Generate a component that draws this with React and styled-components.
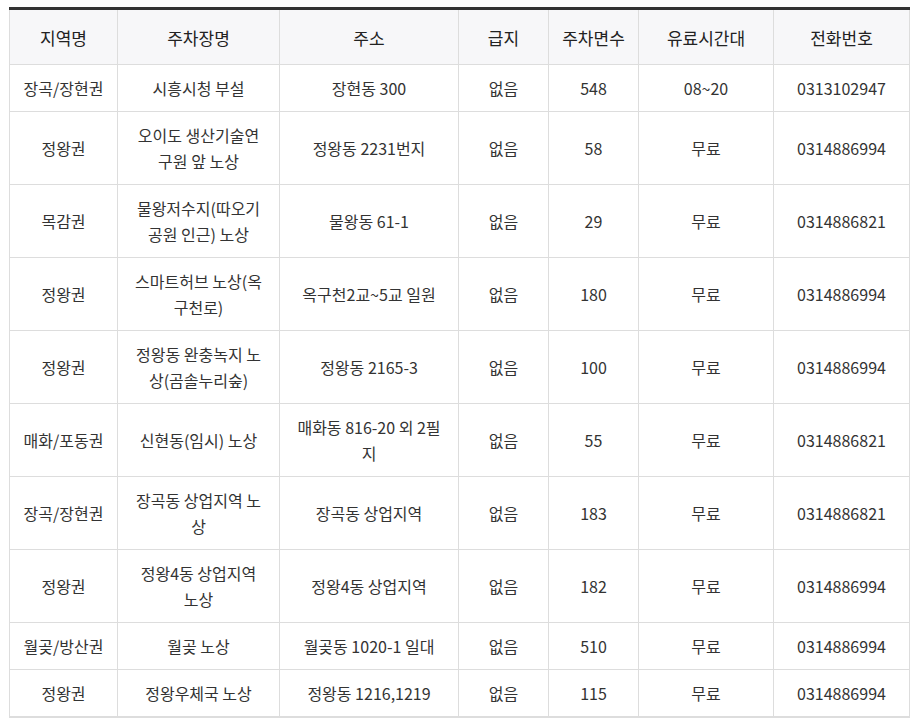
import React from 'react';
import styled, { createGlobalStyle } from 'styled-components';

const GlobalStyle = createGlobalStyle`
  body {
    margin: 0;
    background: #ffffff;
    font-family: "Noto Sans CJK KR", "Noto Sans", sans-serif;
    color: #333333;
  }
`;

const Wrapper = styled.div`
  padding: 7px 8px 0 9px;
`;

const Table = styled.table`
  width: 900px;
  border-collapse: collapse;
  table-layout: fixed;
  border-top: 3px solid #333333;
  border-bottom: 2px solid #dddddd;
`;

const HeadCell = styled.th`
  padding: 15px 6px 14px;
  line-height: 25px;
  font-size: 17px;
  font-weight: 400;
  color: #222222;
  background: #f7f7f9;
  border: 1px solid #dddddd;
  border-top: none;
  text-align: center;
`;

const Cell = styled.td`
  padding: 10px ${(p) => (p.$wrap ? 15 : 6)}px;
  line-height: 26px;
  font-size: 16px;
  color: #333333;
  border: 1px solid #dddddd;
  text-align: center;
  vertical-align: middle;
  word-break: break-all;
`;

const columns = [
  { title: '지역명', width: 108 },
  { title: '주차장명', width: 162, wrap: true },
  { title: '주소', width: 179, wrap: true },
  { title: '급지', width: 90 },
  { title: '주차면수', width: 90 },
  { title: '유료시간대', width: 135 },
  { title: '전화번호', width: 136 },
];

const rows = [
  ['장곡/장현권', '시흥시청 부설', '장현동 300', '없음', '548', '08~20', '0313102947'],
  ['정왕권', '오이도 생산기술연구원 앞 노상', '정왕동 2231번지', '없음', '58', '무료', '0314886994'],
  ['목감권', '물왕저수지(따오기공원 인근) 노상', '물왕동 61-1', '없음', '29', '무료', '0314886821'],
  ['정왕권', '스마트허브 노상(옥구천로)', '옥구천2교~5교 일원', '없음', '180', '무료', '0314886994'],
  ['정왕권', '정왕동 완충녹지 노상(곰솔누리숲)', '정왕동 2165-3', '없음', '100', '무료', '0314886994'],
  ['매화/포동권', '신현동(임시) 노상', '매화동 816-20 외 2필지', '없음', '55', '무료', '0314886821'],
  ['장곡/장현권', '장곡동 상업지역 노상', '장곡동 상업지역', '없음', '183', '무료', '0314886821'],
  ['정왕권', '정왕4동 상업지역 노상', '정왕4동 상업지역', '없음', '182', '무료', '0314886994'],
  ['월곶/방산권', '월곶 노상', '월곶동 1020-1 일대', '없음', '510', '무료', '0314886994'],
  ['정왕권', '정왕우체국 노상', '정왕동 1216,1219', '없음', '115', '무료', '0314886994'],
];

export default function App() {
  return (
    <Wrapper>
      <GlobalStyle />
      <Table>
        <colgroup>
          {columns.map((c) => (
            <col key={c.title} style={{ width: c.width }} />
          ))}
        </colgroup>
        <thead>
          <tr>
            {columns.map((c) => (
              <HeadCell key={c.title}>{c.title}</HeadCell>
            ))}
          </tr>
        </thead>
        <tbody>
          {rows.map((row, i) => (
            <tr key={i}>
              {row.map((v, j) => (
                <Cell key={j} $wrap={columns[j].wrap}>
                  {v}
                </Cell>
              ))}
            </tr>
          ))}
        </tbody>
      </Table>
    </Wrapper>
  );
}
